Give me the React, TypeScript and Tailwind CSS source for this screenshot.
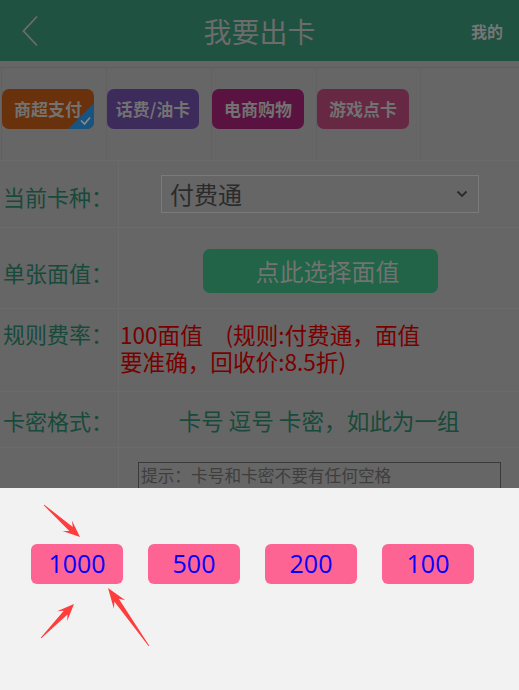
import React from "react";

type Pt = [number, number];

function arrowPoints(tail: Pt, tip: Pt, headLen = 17, headHalf = 7, shaftHalf = 2.6): string {
  const dx = tip[0] - tail[0];
  const dy = tip[1] - tail[1];
  const len = Math.hypot(dx, dy);
  const ux = dx / len;
  const uy = dy / len;
  const nx = -uy;
  const ny = ux;
  const bx = tip[0] - ux * headLen;
  const by = tip[1] - uy * headLen;
  const cx = tip[0] - ux * (headLen - 5);
  const cy = tip[1] - uy * (headLen - 5);
  const pts: Pt[] = [
    [tail[0] + nx * 0.4, tail[1] + ny * 0.4],
    [cx + nx * shaftHalf, cy + ny * shaftHalf],
    [bx + nx * headHalf, by + ny * headHalf],
    tip,
    [bx - nx * headHalf, by - ny * headHalf],
    [cx - nx * shaftHalf, cy - ny * shaftHalf],
    [tail[0] - nx * 0.4, tail[1] - ny * 0.4],
  ];
  return pts.map((p) => `${p[0].toFixed(1)},${p[1].toFixed(1)}`).join(" ");
}

const tabs = [
  { label: "商超支付", bg: "bg-[#6a320c]", checked: true },
  { label: "话费/油卡", bg: "bg-[#3c2b5b]", checked: false },
  { label: "电商购物", bg: "bg-[#5a1340]", checked: false },
  { label: "游戏点卡", bg: "bg-[#662843]", checked: false },
];

const values = ["1000", "500", "200", "100"];

export default function App() {
  return (
    <div className="relative w-[519px] h-[690px] overflow-hidden bg-[#666666] font-['Noto_Sans_CJK_SC','Noto_Sans',sans-serif]">
      {/* Header */}
      <div className="h-[61px] bg-[#1f5240] flex items-center">
        <div className="w-[80px] pl-[22px] flex items-center">
          <svg width="18" height="32" viewBox="0 0 18 32" fill="none">
            <path d="M15 1.5 L1.5 16 L15 30.5" stroke="#6c6c6c" strokeWidth="1.8" />
          </svg>
        </div>
        <div className="flex-1 text-center text-[28px] text-[#6c6c6c] leading-none">我要出卡</div>
        <div className="w-[80px] text-right pr-[16px] text-[16px] font-bold text-[#777777]">我的</div>
      </div>

      {/* Tabs */}
      <div className="mt-[6px] border-t border-[#5e5e5e] h-[93px] flex pl-px">
        {tabs.map((t, i) => (
          <div
            key={t.label}
            className={`w-[105px] h-full border-l border-[#616161] pt-[21px] ${i === tabs.length - 1 ? "border-r" : ""}`}
          >
            <div
              className={`relative w-[92px] h-[40px] rounded-[7px] overflow-hidden ${t.bg} flex items-center justify-center text-[17px] font-bold text-[#727272]`}
            >
              {t.label}
              {t.checked && (
                <svg className="absolute right-0 bottom-0" width="26" height="26" viewBox="0 0 26 26">
                  <polygon points="26,0 26,26 0,26" fill="#185482" />
                  <path d="M13 17.5 L16.5 21 L22 14.5" stroke="#8a8a8a" strokeWidth="1.6" fill="none" />
                </svg>
              )}
            </div>
          </div>
        ))}
      </div>

      {/* Form */}
      <div className="border-t border-[#6b6b6b] text-[22px]">
        <div className="grid grid-cols-[119px_1fr] h-[67px] border-b border-[#6b6b6b]">
          <div className="border-r border-[#6b6b6b] flex items-center pl-[3px] pt-[4px] text-[#174a3a]">当前卡种：</div>
          <div className="flex items-center pl-[42px]">
            <div className="w-[318px] h-[38px] border border-[#7a7a7a] flex items-center justify-between pl-[8px] pr-[10px]">
              <span className="text-[24px] text-[#2b2b2b]">付费通</span>
              <svg width="12" height="8" viewBox="0 0 12 8">
                <path d="M1.5 1.5 L6 6 L10.5 1.5" stroke="#2b2b2b" strokeWidth="1.8" fill="none" />
              </svg>
            </div>
          </div>
        </div>

        <div className="grid grid-cols-[119px_1fr] h-[81px] border-b border-[#6b6b6b]">
          <div className="border-r border-[#6b6b6b] flex items-center pl-[3px] pt-[8px] text-[#174a3a]">单张面值：</div>
          <div className="flex items-center pl-[84px] pt-[6px]">
            <div className="w-[235px] h-[44px] rounded-[7px] bg-[#216447] flex items-center justify-center pl-[14px] text-[24px] text-[#737373]">
              点此选择面值
            </div>
          </div>
        </div>

        <div className="grid grid-cols-[119px_1fr] h-[83px] border-b border-[#6b6b6b]">
          <div className="border-r border-[#6b6b6b] pl-[3px] pt-[11px] text-[#174a3a] leading-[27px]">规则费率：</div>
          <div className="pl-[1px] pt-[12px] leading-[27px] text-[22.6px] text-[#7a0000]">
            100面值　(规则:付费通，面值
            <br />
            要准确，回收价:8.5折)
          </div>
        </div>

        <div className="grid grid-cols-[119px_1fr] h-[56px] border-b border-[#6b6b6b]">
          <div className="border-r border-[#6b6b6b] flex items-center pl-[3px] pt-[2px] text-[#174a3a]">卡密格式：</div>
          <div className="flex items-center justify-center pt-[2px] text-[22.6px] text-[#174a3a]">卡号 逗号 卡密，如此为一组</div>
        </div>

        <div className="grid grid-cols-[119px_1fr] h-[120px]">
          <div className="border-r border-[#6b6b6b]" />
          <div className="pl-[19px] pt-[14px]">
            <div className="w-[363px] h-[80px] border border-[#3a3a3a] pl-[2px] text-[16.7px] text-[#3e3e3e] leading-[24px]">
              提示：卡号和卡密不要有任何空格
            </div>
          </div>
        </div>
      </div>

      {/* Bottom sheet */}
      <div className="absolute left-0 right-0 bottom-0 h-[202px] bg-[#f2f2f2]">
        <div className="flex gap-[25px] pl-[31px] pt-[56px]">
          {values.map((v) => (
            <div
              key={v}
              className="w-[92px] h-[40px] rounded-[6px] bg-[#fd6494] flex items-center justify-center text-[25px] text-[#0000ff] font-['Open_Sans','Noto_Sans_CJK_SC',sans-serif]"
            >
              {v}
            </div>
          ))}
        </div>
      </div>

      {/* Annotation arrows */}
      <svg className="absolute left-0 top-0 pointer-events-none" width="519" height="690" viewBox="0 0 519 690">
        <polygon points={arrowPoints([44, 505], [80, 537])} fill="#ff3d3d" />
        <polygon points={arrowPoints([41, 638], [74, 604])} fill="#ff3d3d" />
        <polygon points={arrowPoints([149, 646], [108, 588], 20)} fill="#ff3d3d" />
      </svg>
    </div>
  );
}
